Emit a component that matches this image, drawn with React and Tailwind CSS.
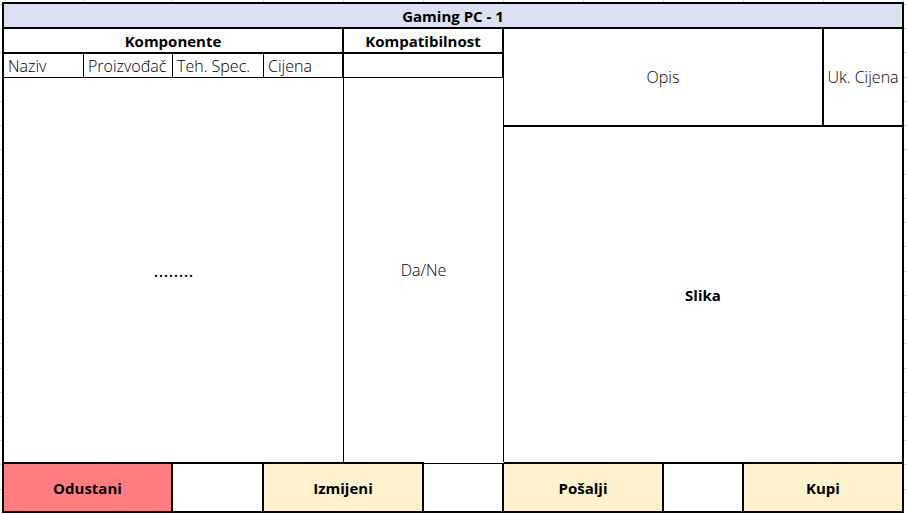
const columnHeads = ["Naziv", "Proizvođač", "Teh. Spec.", "Cijena"];

const sheetColumns =
  "grid grid-cols-[80fr_89fr_91fr_80fr_80fr_80fr_80fr_80fr_80fr_80fr_80fr]";

function ColumnTicks() {
  return (
    <div className={`${sheetColumns} ml-[2px] mr-[3px] h-[2px] shrink-0 border-l-2 border-transparent`} aria-hidden="true">
      {Array.from({ length: 11 }, (_, i) => (
        <div key={i} className="border-r border-[#d4d4d4]" />
      ))}
    </div>
  );
}

function RowTicks({ className }) {
  return (
    <div className={`flex shrink-0 flex-col pt-[2px] ${className}`} aria-hidden="true">
      {Array.from({ length: 21 }, (_, i) => (
        <div key={i} className="flex-1 border-t border-[#d4d4d4]" />
      ))}
    </div>
  );
}

function PartsTable() {
  return (
    <table className="h-full w-full table-fixed border-separate border-spacing-0 border-black">
      <colgroup>
        <col className="w-[16%]" />
        <col className="w-[17.8%]" />
        <col className="w-[18.2%]" />
        <col className="w-[16%]" />
        <col className="w-[32%]" />
      </colgroup>
      <thead>
        <tr className="h-[25px]">
          <th colSpan={4} className="border-r-2 border-b-2 border-black p-0 font-bold">
            Komponente
          </th>
          <th className="border-r-2 border-b-2 border-black p-0 font-bold">Kompatibilnost</th>
        </tr>
        <tr className="h-[24px]">
          {columnHeads.map((head) => (
            <th
              key={head}
              className="border-r border-b border-black p-0 pl-1 text-left text-[16px] leading-5 font-light whitespace-nowrap nth-4:border-r-2"
            >
              {head}
            </th>
          ))}
          <td className="border-r-2 border-b border-black p-0" />
        </tr>
      </thead>
      <tbody>
        <tr>
          <td colSpan={4} className="border-r border-black p-0 text-center text-[19px] leading-5">
            ........
          </td>
          <td className="border-r border-black p-0 text-center text-[16px] leading-5 font-light">Da/Ne</td>
        </tr>
      </tbody>
    </table>
  );
}

function Preview() {
  return (
    <div className="flex flex-col border-r-2 border-black">
      <div className="grid h-[98px] grid-cols-[320fr_78fr] border-b-2 border-black text-[16px] leading-5 font-light">
        <div className="flex items-center justify-center border-r-2 border-black">Opis</div>
        <div className="flex items-center justify-center whitespace-nowrap">Uk. Cijena</div>
      </div>
      <div className="flex flex-1 items-center justify-center font-bold">Slika</div>
    </div>
  );
}

function Action({ className, children }) {
  return (
    <button type="button" className={`border-t-2 border-r-2 border-b-2 border-black font-bold ${className}`}>
      {children}
    </button>
  );
}

function Actions() {
  return (
    <div className="grid h-[51px] shrink-0 grid-cols-[169fr_91fr_160fr_80fr_160fr_80fr_160fr]">
      <Action className="bg-[#ff7c80]">Odustani</Action>
      <div className="border-t-2 border-r-2 border-b-2 border-black" />
      <Action className="bg-[#fff2cc]">Izmijeni</Action>
      <div className="mt-px border-t border-r-2 border-b-2 border-black" />
      <Action className="bg-[#fff2cc]">Pošalji</Action>
      <div className="border-t-2 border-r-2 border-b-2 border-black" />
      <Action className="bg-[#fff2cc]">Kupi</Action>
    </div>
  );
}

export default function App() {
  return (
    <div className="flex min-h-screen flex-col bg-white pb-px font-['Open_Sans','Noto_Sans',sans-serif] text-[15px] leading-5 text-black">
      <ColumnTicks />
      <div className="flex flex-1">
        <RowTicks className="w-[2px]" />
        <main className="flex min-w-0 flex-1 flex-col border-t-2 border-l-2 border-black">
          <h1 className="flex h-[25px] items-center justify-center border-r-2 border-b-2 border-black bg-[#d9e1f2] font-bold">
            Gaming PC - 1
          </h1>
          <div className="grid flex-1 grid-cols-[500fr_400fr]">
            <PartsTable />
            <Preview />
          </div>
          <Actions />
        </main>
        <RowTicks className="w-[3px]" />
      </div>
    </div>
  );
}
